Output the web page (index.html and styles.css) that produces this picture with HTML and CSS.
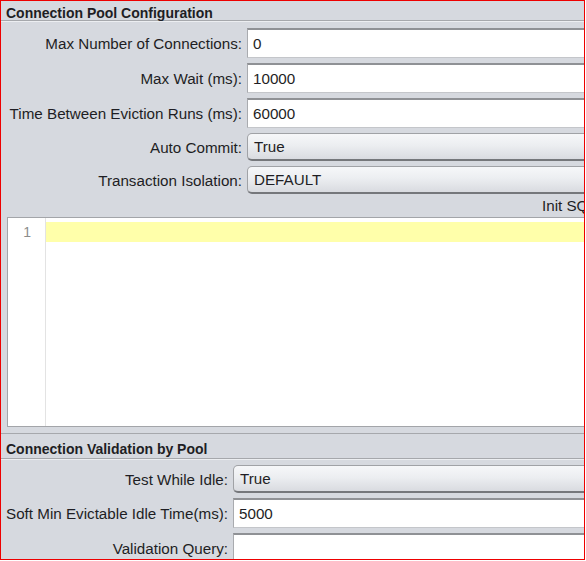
FILE: index.html
```html
<!DOCTYPE html>
<html>
<head>
  <meta charset="utf-8">
  <title>Connection Pool Configuration</title>
  <link rel="stylesheet" href="styles.css">
</head>
<body>
  <div class="frame">
    <div class="section-head">Connection Pool Configuration</div>
    <div class="form form--pool">
      <label class="form__label">Max Number of Connections:</label>
      <div class="field">0</div>
      <label class="form__label">Max Wait (ms):</label>
      <div class="field">10000</div>
      <label class="form__label">Time Between Eviction Runs (ms):</label>
      <div class="field">60000</div>
      <label class="form__label">Auto Commit:</label>
      <div class="combo">True</div>
      <label class="form__label">Transaction Isolation:</label>
      <div class="combo">DEFAULT</div>
    </div>
    <div class="init-label">Init SQL statements separated by new lines:</div>
    <div class="editor">
      <div class="editor__gutter">
        <div class="editor__num">1</div>
      </div>
      <div class="editor__body">
        <div class="editor__line editor__line--current"></div>
      </div>
    </div>
    <div class="section-head section-head--ruled">Connection Validation by Pool</div>
    <div class="form form--validation">
      <label class="form__label">Test While Idle:</label>
      <div class="combo">True</div>
      <label class="form__label">Soft Min Evictable Idle Time(ms):</label>
      <div class="field">5000</div>
      <label class="form__label">Validation Query:</label>
      <div class="field"></div>
    </div>
  </div>
</body>
</html>
```

FILE: styles.css
```css
body {
  margin: 0;
  background: #fff;
  font-family: "Liberation Sans", Arial, sans-serif;
  color: #1e1e24;
}

.frame {
  width: 585px;
  height: 560px;
  box-sizing: border-box;
  border: 1px solid #ee0000;
  background-color: #d6d9df;
  overflow: hidden;
}

.section-head {
  height: 20px;
  padding: 3px 0 0 5px;
  box-sizing: border-box;
  font-size: 14px;
  font-weight: bold;
  line-height: 18px;
  background-color: #d6d9df;
  border-bottom: 1px solid #a6a8ac;
  box-shadow: 0 1px 0 #eceef1;
}
.section-head--ruled {
  height: 26px;
  padding-top: 5px;
  line-height: 20px;
  border-top: 1px solid #a6a8ac;
}

.form {
  display: grid;
  grid-template-columns: 241px 1fr;
  column-gap: 5px;
  row-gap: 5px;
  padding: 7px 0 0 0;
  margin-right: -20px;
  font-size: 15.2px;
}
.form--validation {
  grid-template-columns: 227px 1fr;
  padding-top: 6px;
}
.form__label {
  display: flex;
  align-items: center;
  justify-content: flex-end;
  white-space: nowrap;
}

.field {
  height: 30px;
  box-sizing: border-box;
  padding-left: 5px;
  line-height: 27px;
  background: #fff;
  border: 1px solid #c4c6ca;
  border-top: 2px solid #8f9195;
  border-left-color: #a9abaf;
}

.combo {
  height: 28px;
  box-sizing: border-box;
  padding-left: 6px;
  line-height: 26px;
  border: 1px solid #a0a2a6;
  border-bottom: 2px solid #75777b;
  border-radius: 5px 0 0 5px;
  background: linear-gradient(#f6f7f9, #eceef1 45%, #d9dbe0);
}

.init-label {
  height: 23px;
  padding: 3px 0 0 541px;
  box-sizing: border-box;
  font-size: 15.2px;
  white-space: nowrap;
}

.editor {
  display: flex;
  height: 208px;
  margin: 0 -10px 6px 6px;
  border: 1px solid #a3a5a9;
  background: #fff;
}
.editor__gutter {
  width: 37px;
  border-right: 1px solid #e3e3e3;
  padding-top: 4px;
}
.editor__num {
  height: 20px;
  line-height: 20px;
  padding-right: 14px;
  text-align: right;
  font-size: 14px;
  color: #8c8c8c;
}
.editor__body {
  flex: 1;
  padding-top: 4px;
}
.editor__line {
  height: 20px;
}
.editor__line--current {
  background-color: #ffffaa;
}
```
